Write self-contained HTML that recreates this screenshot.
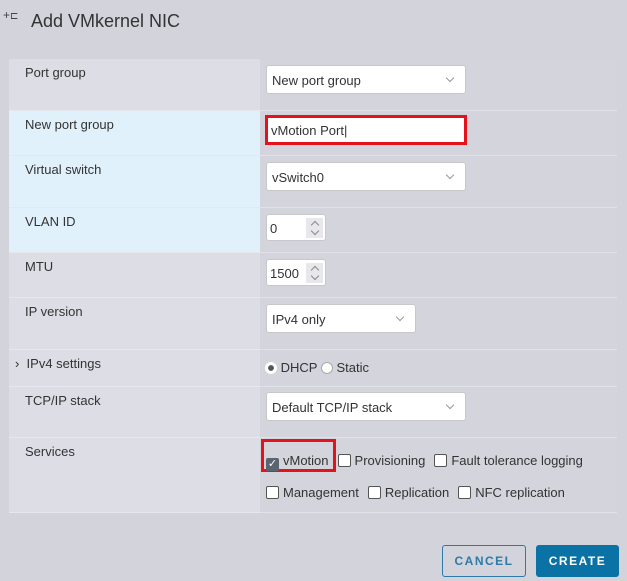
<!DOCTYPE html>
<html><head><style>
*{box-sizing:border-box;margin:0;padding:0}
body{width:627px;height:581px;background:#d2d3db;font-family:"Liberation Sans",sans-serif;font-size:13px;color:#333;position:relative;overflow:hidden}
.a{position:absolute}
.lab{position:absolute;left:9px;width:251px;background:#dcdde5;border-bottom:1px solid #e6e7ee}
.lab.b{background:#e1f1fb}
.lab span{position:absolute;left:16px;top:6px}
.val{position:absolute;left:260px;width:357px;border-bottom:1px solid #e1e2e8;background:#d3d4dc}
.sel{position:absolute;background:#fff;border:1px solid #c8c8cc;border-radius:3px;height:29px;padding:7px 5px;font-size:13px}
.sel:after{content:"";position:absolute;right:12px;top:9px;width:5px;height:5px;border-right:1px solid #999;border-bottom:1px solid #999;transform:rotate(45deg)}
.num{position:absolute;left:266px;width:60px;height:27px;background:#fff;border:1px solid #c8c8cc;border-radius:3px;padding:6px 3px}
.num i{position:absolute;right:2px;top:3px;width:17px;height:20px;background:#e8e8ec}
.num i:before,.num i:after{content:"";position:absolute;left:6px;width:5px;height:5px;border-left:1px solid #888;border-top:1px solid #888}
.num i:before{top:4px;transform:rotate(45deg)}
.num i:after{top:10px;transform:rotate(-135deg)}
.cb{display:inline-block;width:13px;height:13px;border:1px solid #555;border-radius:2px;background:#fff;vertical-align:-2px;margin-right:4px}
.g{display:inline-block;width:9px}
</style></head><body>
<div class="a" style="left:3px;top:8px;font-size:12px;color:#444">+<span style="font-size:10px">⊏</span></div>
<div class="a" style="left:31px;top:11px;font-size:18px;color:#333">Add VMkernel NIC</div>

<div class="lab" style="top:59px;height:52px"><span>Port group</span></div>
<div class="val" style="top:59px;height:52px"></div>
<div class="sel" style="left:266px;top:65px;width:200px">New port group</div>

<div class="lab b" style="top:111px;height:45px"><span>New port group</span></div>
<div class="val" style="top:111px;height:45px"></div>
<div class="a" style="left:265px;top:115px;width:202px;height:30px;border:3px solid #e3121d;background:#fff;padding:5px 3px">vMotion Port|</div>

<div class="lab b" style="top:156px;height:52px"><span>Virtual switch</span></div>
<div class="val" style="top:156px;height:52px"></div>
<div class="sel" style="left:266px;top:162px;width:200px">vSwitch0</div>

<div class="lab b" style="top:208px;height:45px"><span>VLAN ID</span></div>
<div class="val" style="top:208px;height:45px"></div>
<div class="num" style="top:214px">0<i></i></div>

<div class="lab" style="top:253px;height:45px"><span>MTU</span></div>
<div class="val" style="top:253px;height:45px"></div>
<div class="num" style="top:259px">1500<i></i></div>

<div class="lab" style="top:298px;height:52px"><span>IP version</span></div>
<div class="val" style="top:298px;height:52px"></div>
<div class="sel" style="left:266px;top:304px;width:150px">IPv4 only</div>

<div class="lab" style="top:350px;height:37px"><span style="left:6px">›&nbsp; IPv4 settings</span></div>
<div class="val" style="top:350px;height:37px"></div>
<div class="a" style="left:265px;top:360px"><span style="display:inline-block;width:12px;height:12px;border-radius:50%;background:#fff;border:3px solid #fff;box-shadow:inset 0 0 0 3px #555;vertical-align:-2px"></span> DHCP <span style="display:inline-block;width:12px;height:12px;border-radius:50%;background:#fff;border:1px solid #aaa;vertical-align:-2px"></span> Static</div>

<div class="lab" style="top:387px;height:51px"><span>TCP/IP stack</span></div>
<div class="val" style="top:387px;height:51px"></div>
<div class="sel" style="left:266px;top:392px;width:200px">Default TCP/IP stack</div>

<div class="lab" style="top:438px;height:75px"><span>Services</span></div>
<div class="val" style="top:438px;height:75px"></div>
<div class="a" style="left:261px;top:439px;width:75px;height:33px;border:3px solid #e3121d"></div>
<div class="a" style="left:266px;top:453px;white-space:nowrap"><span class="cb" style="background:#5a6572;border-color:#5a6572;color:#fff;font-size:11px;line-height:11px;text-align:center">✓</span>vMotion<span class="g"></span><span class="cb"></span>Provisioning<span class="g"></span><span class="cb"></span>Fault tolerance logging</div>
<div class="a" style="left:266px;top:485px;white-space:nowrap"><span class="cb"></span>Management<span class="g"></span><span class="cb"></span>Replication<span class="g"></span><span class="cb"></span>NFC replication</div>

<div class="a" style="left:442px;top:545px;width:84px;height:32px;border:1px solid #2d7aa8;border-radius:3px;color:#2d7aa8;font-weight:bold;letter-spacing:1.5px;font-size:12px;text-align:center;line-height:30px">CANCEL</div>
<div class="a" style="left:536px;top:545px;width:83px;height:32px;background:#0b72a5;border-radius:3px;color:#fff;font-weight:bold;letter-spacing:1.5px;font-size:12px;text-align:center;line-height:32px">CREATE</div>
</body></html>
